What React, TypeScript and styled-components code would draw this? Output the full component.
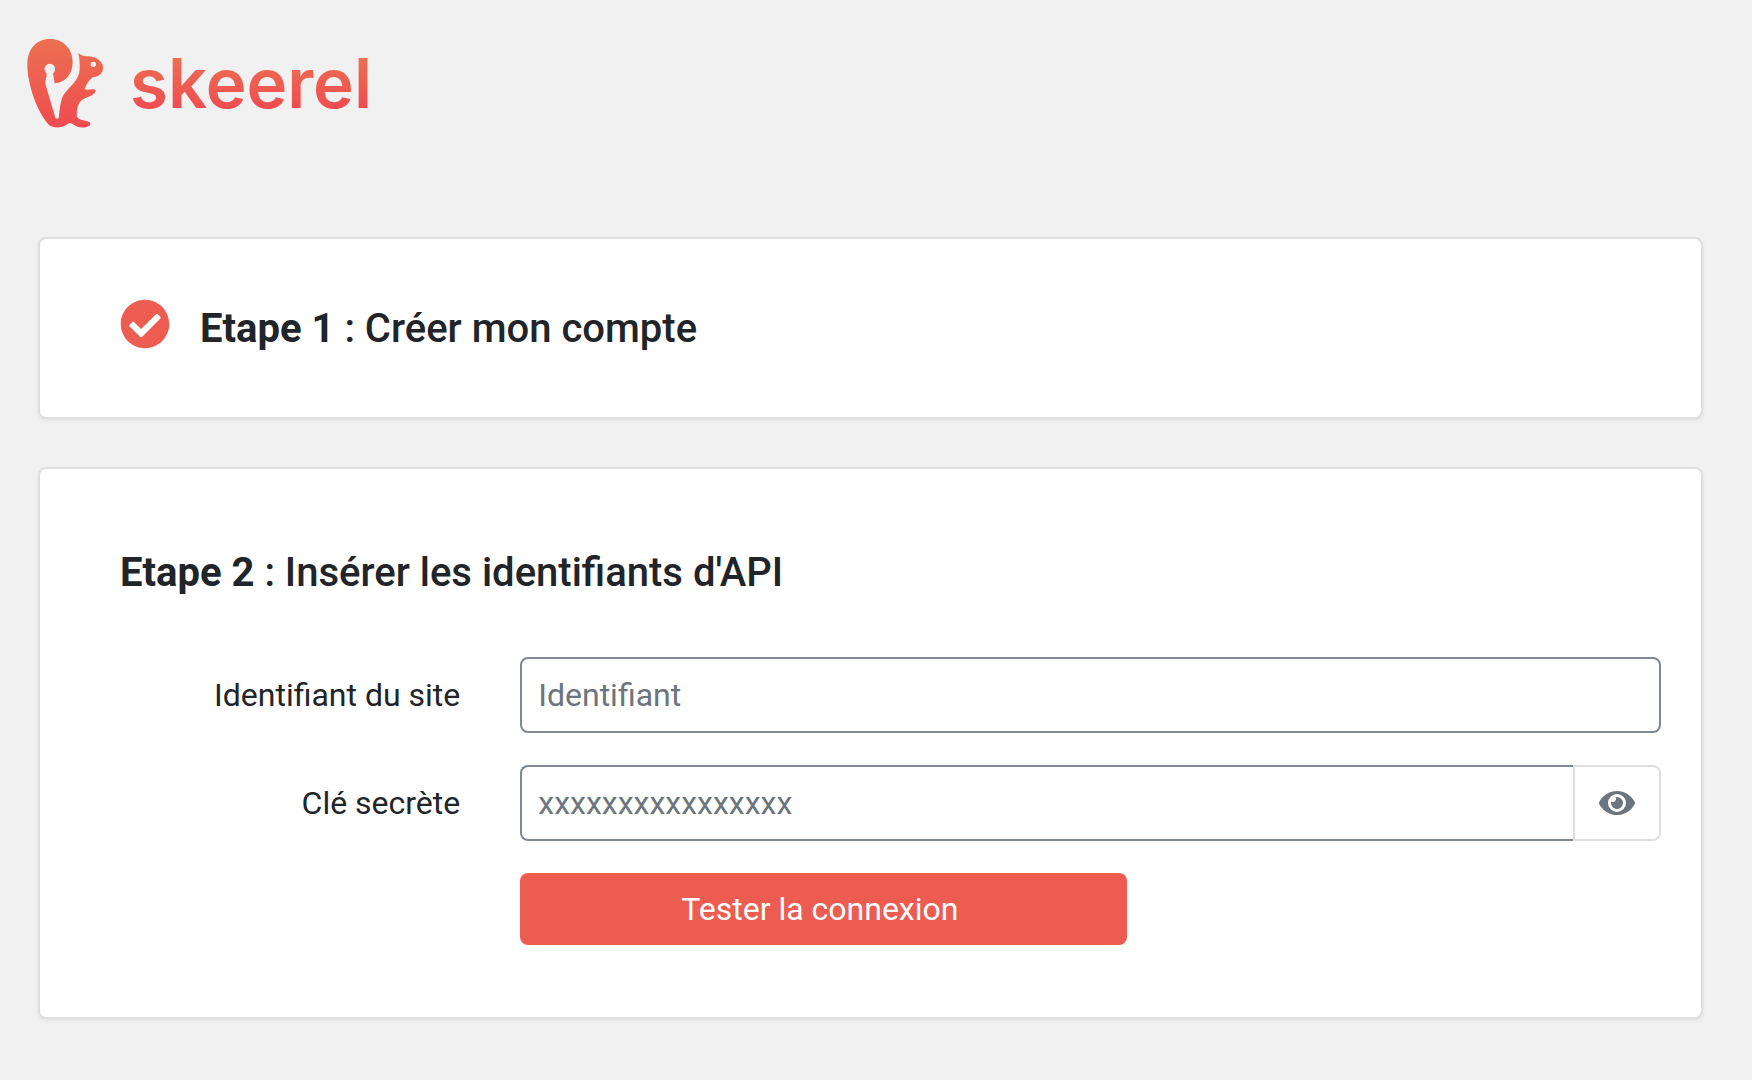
import React, { useState } from "react";
import styled, { createGlobalStyle } from "styled-components";
import { FaCheckCircle, FaEye } from "react-icons/fa";

const GlobalStyle = createGlobalStyle`
  *, *::before, *::after { box-sizing: border-box; }
  body {
    margin: 0;
    background: #f1f1f1;
    color: #212529;
    font-family: Roboto, "Liberation Sans", sans-serif;
    font-size: 32px;
    line-height: 48px;
  }
`;

const Page = styled.main`
  padding: 30px 49px 60px 38px;
`;

const Brand = styled.header`
  display: flex;
  align-items: flex-start;
  gap: 10px;
  margin: 0 0 97px -18px;
`;

const BrandMark = styled.svg`
  flex: none;
  width: 100px;
  height: 110px;
`;

const BrandName = styled.span`
  font-family: Inter, sans-serif;
  font-size: 69px;
  font-weight: 600;
  line-height: 106px;
  color: transparent;
  background: linear-gradient(#ec7050 26px, #f04b50 80px);
  background-clip: text;
  -webkit-background-clip: text;
`;

const Cards = styled.div`
  display: grid;
  gap: 48px;
`;

const Card = styled.section<{ $top: number; $bottom: number }>`
  padding: ${(p) => p.$top}px 40px ${(p) => p.$bottom}px 80px;
  background: #fff;
  border: 2px solid #dedede;
  border-radius: 8px;
  box-shadow: 0 2px 4px rgba(0, 0, 0, 0.06);
`;

const StepHeader = styled.div`
  display: flex;
  align-items: flex-start;
  gap: 30px;
`;

const DoneIcon = styled(FaCheckCircle)`
  flex: none;
  width: 50px;
  height: 50px;
  color: #ec5c51;
`;

const StepTitle = styled.h2`
  margin: 0;
  font-size: 40px;
  font-weight: 500;
  line-height: 60px;
  strong { font-weight: 700; }
`;

const Form = styled.form`
  display: grid;
  gap: 32px;
  margin: 54px -30px 0;
`;

const Row = styled.div`
  display: flex;
  align-items: center;
`;

const Label = styled.label`
  flex: 0 0 25%;
  padding: 0 30px;
  text-align: right;
`;

const Field = styled.div`
  display: flex;
  flex: 1;
  min-width: 0;
  padding: 0 30px;
`;

const TextInput = styled.input<{ $joined?: boolean }>`
  flex: 1;
  min-width: 0;
  height: 76px;
  padding: 0 16px;
  color: #495057;
  background: #fff;
  border: 2px solid #7e8993;
  border-right-width: ${(p) => (p.$joined ? 0 : 2)}px;
  border-radius: ${(p) => (p.$joined ? "8px 0 0 8px" : "8px")};
  font: inherit;
  &::placeholder { color: #6c757d; opacity: 1; }
`;

const RevealButton = styled.button`
  display: flex;
  align-items: center;
  justify-content: center;
  width: 88px;
  padding: 0;
  color: #6c757d;
  background: #fff;
  border: 2px solid #dedede;
  border-radius: 0 8px 8px 0;
  cursor: pointer;
  svg { width: 36px; height: 32px; }
`;

const Actions = styled.div`
  width: calc(100% * 5 / 12);
  margin-left: 25%;
  padding: 0 30px;
`;

const SubmitButton = styled.button`
  width: 100%;
  padding: 12px 24px 12px 16px;
  color: #fff;
  background: #ec5c51;
  border: 0;
  border-radius: 8px;
  font: inherit;
  cursor: pointer;
`;

function Squirrel() {
  return (
    <BrandMark viewBox="0 0 300 330" aria-hidden="true">
      <defs>
        <linearGradient id="fur" gradientUnits="userSpaceOnUse" x1="0" y1="27" x2="0" y2="292">
          <stop offset="0" stopColor="#ec7050" />
          <stop offset="1" stopColor="#f04b50" />
        </linearGradient>
      </defs>
      <path
        fill="url(#fur)"
        fillRule="evenodd"
        d="M22 105C22 55 50 27 90 27C130 27 158 57 158 97C158 135 133 159 104 160L99 130A16 16 0 1 0 80 130C81 142 75 150 76 161L106 264Q111 268 116 264C120 232 122 208 132 193C150 168 178 150 179 118C180 100 178 84 175 68C182 77 194 79 207 79C230 81 249 96 249 112C249 131 237 140 220 141C208 148 198 163 194 178C204 181 213 176 223 178C228 180 228 186 223 190C208 204 192 202 182 214C171 226 169 246 171 261C180 273 200 271 208 276C214 282 210 288 202 290C186 295 171 292 163 285C154 278 147 278 139 284C124 295 100 295 87 285C50 245 22 160 22 105ZM228 103A8 8 0 1 0 212 103A8 8 0 1 0 228 103Z"
      />
    </BrandMark>
  );
}

export default function App() {
  const [visible, setVisible] = useState(false);

  return (
    <>
      <GlobalStyle />
      <Page>
        <Brand>
          <Squirrel />
          <BrandName>skeerel</BrandName>
        </Brand>
        <Cards>
          <Card $top={60} $bottom={58}>
            <StepHeader>
              <DoneIcon aria-hidden="true" />
              <StepTitle>
                <strong>Etape 1</strong> : Créer mon compte
              </StepTitle>
            </StepHeader>
          </Card>
          <Card $top={74} $bottom={72}>
            <StepTitle>
              <strong>Etape 2</strong> : Insérer les identifiants d'API
            </StepTitle>
            <Form onSubmit={(e) => e.preventDefault()}>
              <Row>
                <Label htmlFor="site-id">Identifiant du site</Label>
                <Field>
                  <TextInput id="site-id" type="text" placeholder="Identifiant" />
                </Field>
              </Row>
              <Row>
                <Label htmlFor="secret-key">Clé secrète</Label>
                <Field>
                  <TextInput
                    id="secret-key"
                    type={visible ? "text" : "password"}
                    placeholder="xxxxxxxxxxxxxxxx"
                    $joined
                  />
                  <RevealButton
                    type="button"
                    aria-label="Afficher la clé secrète"
                    aria-pressed={visible}
                    onClick={() => setVisible(!visible)}
                  >
                    <FaEye aria-hidden="true" />
                  </RevealButton>
                </Field>
              </Row>
              <Actions>
                <SubmitButton type="submit">Tester la connexion</SubmitButton>
              </Actions>
            </Form>
          </Card>
        </Cards>
      </Page>
    </>
  );
}
